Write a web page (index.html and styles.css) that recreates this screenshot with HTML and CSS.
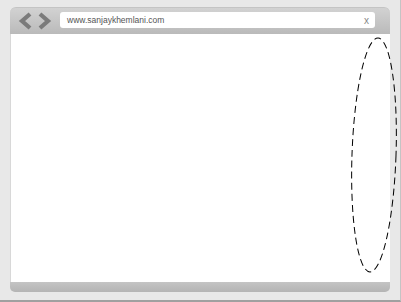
FILE: index.html
```html
<!DOCTYPE html>
<html>
<head>
<meta charset="utf-8">
<link rel="stylesheet" href="styles.css">
</head>
<body>
<div class="screen">
  <div class="frame">
    <div class="toolbar">
      <div class="nav">
        <svg width="36" height="18" viewBox="0 0 36 18">
          <polyline points="12,2 4,9 12,16" fill="none" stroke="#7b7b7b" stroke-width="4.2" stroke-linejoin="miter"/>
          <polyline points="22,2 30,9 22,16" fill="none" stroke="#7b7b7b" stroke-width="4.2" stroke-linejoin="miter"/>
        </svg>
      </div>
      <div class="address">
        <span class="url">www.sanjaykhemlani.com</span>
        <span class="close">x</span>
      </div>
    </div>
    <div class="content"></div>
    <div class="statusbar"></div>
  </div>
  <svg class="ellipse" width="60" height="250" viewBox="0 0 60 250">
    <ellipse cx="24" cy="119" rx="22" ry="117" transform="rotate(2 24 119)" fill="none" stroke="#000" stroke-width="1" stroke-dasharray="7 4"/>
  </svg>
</div>
</body>
</html>
```
FILE: styles.css
```css
html, body {
  margin: 0;
  padding: 0;
}
body {
  width: 401px;
  height: 302px;
  overflow: hidden;
  background: #e8e8e8;
}
.screen {
  position: relative;
  width: 401px;
  height: 302px;
  box-sizing: border-box;
  padding: 7px 0 0 10px;
  background: #e8e8e8;
  border-right: 1px solid #c4c4c4;
  border-bottom: 2px solid #a0a0a0;
}
.frame {
  width: 380px;
  display: flex;
  flex-direction: column;
}
.toolbar {
  height: 27px;
  box-sizing: border-box;
  border-radius: 6px 6px 0 0;
  background: linear-gradient(#d2d2d2, #bababa);
  border-top: 1px solid #c4c4c4;
  display: flex;
  align-items: center;
  padding: 0 0 2px 8px;
}
.nav {
  width: 42px;
  height: 18px;
  display: flex;
  align-items: center;
  margin-top: 1px;
}
.address {
  flex: 0 0 315px;
  height: 16px;
  background: #fff;
  border-radius: 3px;
  display: flex;
  align-items: center;
  justify-content: space-between;
  padding: 0 6px 0 7px;
  box-sizing: border-box;
  font-family: "Liberation Sans", Arial, sans-serif;
  font-size: 8.5px;
  color: #555;
}
.close {
  color: #888;
  font-size: 10px;
}
.content {
  height: 248px;
  background: #fff;
  border-left: 1px solid #d8d8d8;
  box-sizing: border-box;
}
.statusbar {
  height: 10px;
  border-radius: 0 0 5px 5px;
  background: linear-gradient(#c4c4c4, #b4b4b4);
}
.ellipse {
  position: absolute;
  left: 350px;
  top: 36px;
}
```
